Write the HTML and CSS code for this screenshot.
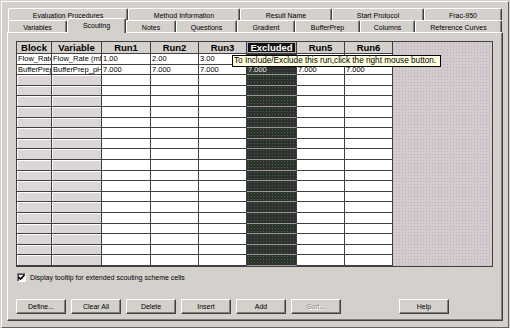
FILE: index.html
```html
<!DOCTYPE html>
<html lang="en">

<head>
	<meta charset="UTF-8">
	<title>Scouting</title>
	<link rel="stylesheet" href="styles.css">
</head>

<body>
	<div class="window">
		<div class="tabs">
			<div class="tab-row">
				<div class="tab w120">Evaluation Procedures</div>
				<div class="tab w112">Method Information</div>
				<div class="tab w92">Result Name</div>
				<div class="tab w92">Start Protocol</div>
				<div class="tab w78">Frac-950</div>
			</div>
			<div class="tab-row">
				<div class="tab w59">Variables</div>
				<div class="tab w59 active">Scouting</div>
				<div class="tab w50">Notes</div>
				<div class="tab w61">Questions</div>
				<div class="tab w58">Gradient</div>
				<div class="tab w65">BufferPrep</div>
				<div class="tab w55">Columns</div>
				<div class="tab w87">Reference Curves</div>
			</div>
		</div>

		<div class="panel">
			<div class="grid">
				<div class="row head">
					<span>Block</span><span>Variable</span><span>Run1</span><span>Run2</span><span>Run3</span><span class="excluded">Excluded</span><span>Run5</span><span>Run6</span>
				</div>
				<div class="row">
					<span>Flow_Rate</span><span>Flow_Rate (ml/min)</span><span>1.00</span><span>2.00</span><span>3.00</span><span></span><span></span><span></span>
				</div>
				<div class="row">
					<span>BufferPrep</span><span>BufferPrep_pH</span><span>7.000</span><span>7.000</span><span>7.000</span><span>7.000</span><span>7.000</span><span>7.000</span>
				</div>
				<div class="row empty"><span></span><span></span><span></span><span></span><span></span><span></span><span></span><span></span></div>
				<div class="row empty"><span></span><span></span><span></span><span></span><span></span><span></span><span></span><span></span></div>
				<div class="row empty"><span></span><span></span><span></span><span></span><span></span><span></span><span></span><span></span></div>
				<div class="row empty"><span></span><span></span><span></span><span></span><span></span><span></span><span></span><span></span></div>
				<div class="row empty"><span></span><span></span><span></span><span></span><span></span><span></span><span></span><span></span></div>
				<div class="row empty"><span></span><span></span><span></span><span></span><span></span><span></span><span></span><span></span></div>
				<div class="row empty"><span></span><span></span><span></span><span></span><span></span><span></span><span></span><span></span></div>
				<div class="row empty"><span></span><span></span><span></span><span></span><span></span><span></span><span></span><span></span></div>
				<div class="row empty"><span></span><span></span><span></span><span></span><span></span><span></span><span></span><span></span></div>
				<div class="row empty"><span></span><span></span><span></span><span></span><span></span><span></span><span></span><span></span></div>
				<div class="row empty"><span></span><span></span><span></span><span></span><span></span><span></span><span></span><span></span></div>
				<div class="row empty"><span></span><span></span><span></span><span></span><span></span><span></span><span></span><span></span></div>
				<div class="row empty"><span></span><span></span><span></span><span></span><span></span><span></span><span></span><span></span></div>
				<div class="row empty"><span></span><span></span><span></span><span></span><span></span><span></span><span></span><span></span></div>
				<div class="row empty"><span></span><span></span><span></span><span></span><span></span><span></span><span></span><span></span></div>
				<div class="row empty"><span></span><span></span><span></span><span></span><span></span><span></span><span></span><span></span></div>
				<div class="row empty"><span></span><span></span><span></span><span></span><span></span><span></span><span></span><span></span></div>
				<div class="row empty"><span></span><span></span><span></span><span></span><span></span><span></span><span></span><span></span></div>

				<div class="tooltip">To Include/Exclude this run,click the right mouse button.</div>
			</div>

			<label class="check">
				<span class="box">
					<svg width="7" height="7" viewBox="0 0 7 7"><polyline points="0.5,3 2.5,5 6.5,1" fill="none" stroke="#000" stroke-width="1.6"/></svg>
				</span>
				Display tooltip for extended scouting scheme cells
			</label>

			<div class="buttons">
				<button>Define...</button>
				<button>Clear All</button>
				<button>Delete</button>
				<button>Insert</button>
				<button>Add</button>
				<button class="disabled">Sort...</button>
				<button class="help">Help</button>
			</div>
		</div>
	</div>
</body>

</html>
```

FILE: styles.css
```css
/*
Classic dialog look.
*/
body {
	margin: 0;
	background: #d4d0cc;
	font-family: "Liberation Sans", Arial, sans-serif;
	font-size: 7px;
	color: #000;
}

.window {
	box-sizing: border-box;
	width: 508px;
	height: 327px;
	margin: 1px 0 0 1px;
	padding: 6px 0 0 5px;
	border: 1px solid;
	border-color: #fff #606060 #606060 #fff;
}

/* tabs */
.tabs {
	margin-left: 1px;
}

.tab-row {
	display: flex;
	height: 12px;
}

.tab {
	box-sizing: border-box;
	display: flex;
	align-items: center;
	justify-content: center;
	height: 12px;
	padding-top: 1px;
	border-top: 1px solid #fff;
	border-left: 1px solid #fff;
	border-right: 1px solid #404040;
	border-radius: 2px 2px 0 0;
	box-shadow: inset -1px 0 #808080;
	background: #d4d0cc;
	white-space: nowrap;
}

.tab.active {
	position: relative;
	top: -2px;
	height: 15px;
	padding-bottom: 3px;
	z-index: 2;
}

.w50 { width: 50px; }
.w55 { width: 55px; }
.w58 { width: 58px; }
.w59 { width: 59px; }
.w61 { width: 61px; }
.w65 { width: 65px; }
.w78 { width: 78px; }
.w87 { width: 87px; }
.w92 { width: 92px; }
.w112 { width: 112px; }
.w120 { width: 120px; }

/* page */
.panel {
	box-sizing: border-box;
	width: 496px;
	height: 289px;
	padding: 8px 0 0 8px;
	border: 1px solid;
	border-color: #fff #404040 #404040 #fff;
	box-shadow: inset -1px -1px #808080;
}

.grid {
	position: relative;
	width: 475px;
	border: 1px solid #404040;
	background-color: #d2cccc;
	background-image: radial-gradient(circle, #c6a6c6 0.6px, transparent 0.8px);
	background-size: 3px 3px;
}

.row {
	display: grid;
	grid-template-columns: 35px 50px 49px 48px 48px 50px 48px 48px;
	width: 376px;
	height: 10.6px;
}

.row > span {
	box-sizing: border-box;
	overflow: hidden;
	white-space: nowrap;
	padding-left: 1px;
	font-size: 7.5px;
	line-height: 9px;
	background: #fff;
	border-right: 1px solid #404040;
	border-bottom: 1px solid #404040;
}

.row > span:nth-child(6) {
	background-color: #2f312f;
	background-image: radial-gradient(circle, #3f6a3f 0.5px, transparent 0.7px);
	background-size: 3px 3px;
	color: #e8e8e8;
	border-bottom-color: #9a9a9a;
}

.row.empty > span:nth-child(-n+2) {
	background: #dcd6d8;
	box-shadow: inset 1px 1px #fff;
}

.row.head {
	height: 12px;
}

.row.head > span {
	padding: 0;
	text-align: center;
	font-size: 9.5px;
	font-weight: bold;
	line-height: 11px;
	background: #d4d0cc;
}

.row.head > span.excluded {
	background: #111;
	color: #fff;
	box-shadow: inset 0 0 0 1px #b0b0b0;
	border-bottom-color: #404040;
}

.tooltip {
	position: absolute;
	left: 215px;
	top: 13px;
	box-sizing: border-box;
	width: 209px;
	height: 12px;
	padding-left: 1px;
	border: 1px solid #000;
	background: #ffffe1;
	font-size: 8.2px;
	line-height: 10px;
	white-space: nowrap;
}

/* checkbox */
.check {
	display: flex;
	align-items: center;
	gap: 4px;
	margin: 6px 0 0 1px;
	height: 10px;
}

.box {
	box-sizing: border-box;
	display: flex;
	align-items: center;
	justify-content: center;
	width: 9px;
	height: 9px;
	background: #fff;
	border: 1px solid;
	border-color: #808080 #fff #fff #808080;
	box-shadow: inset 1px 1px #404040;
}

/* buttons */
.buttons {
	display: flex;
	gap: 5px;
	margin-top: 16px;
}

button {
	box-sizing: border-box;
	width: 50px;
	height: 15px;
	padding: 0;
	font-family: "Liberation Sans", Arial, sans-serif;
	font-size: 7px;
	color: #000;
	background: #d4d0cc;
	border: 1px solid;
	border-color: #fff #404040 #404040 #fff;
	box-shadow: inset -1px -1px #808080;
}

button.disabled {
	color: #8c8c8c;
	text-shadow: 1px 1px 0 #fff;
}

button.help {
	margin-left: 53px;
}
```
